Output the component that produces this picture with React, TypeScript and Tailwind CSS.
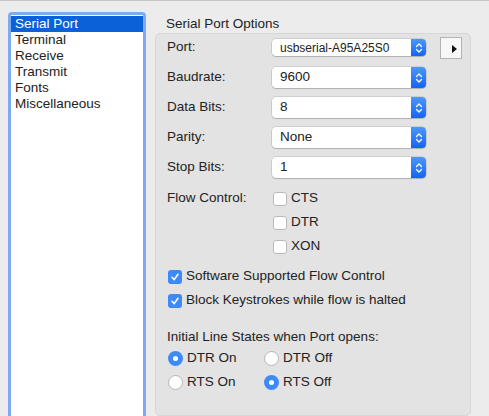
import React from 'react';

const font = { fontFamily: '"Liberation Sans", Arial, sans-serif' };

const categories = ['Serial Port', 'Terminal', 'Receive', 'Transmit', 'Fonts', 'Miscellaneous'];

// blue stepper arrows on the right of a popup
const Stepper = () => (
  <div className="flex h-full w-[15px] items-center justify-center rounded-r-[4px] bg-gradient-to-b from-[#4b97fa] to-[#1463f3]">
    <svg width="8" height="12" viewBox="0 0 8 12" fill="none" stroke="white" strokeWidth="1.3" strokeLinecap="round" strokeLinejoin="round">
      <path d="M1.5 4.5 L4 2 L6.5 4.5" />
      <path d="M1.5 7.5 L4 10 L6.5 7.5" />
    </svg>
  </div>
);

const Popup = ({ value, small }: { value: string; small?: boolean }) => (
  <div
    className={`flex w-[154px] items-center rounded-[4px] bg-white shadow-[0_0_0_0.5px_rgba(0,0,0,0.18),0_1px_1px_rgba(0,0,0,0.15)] ${
      small ? 'h-[17px]' : 'h-[21px]'
    }`}
  >
    <span className={`flex-1 pl-[8px] text-[#222] ${small ? 'text-[12px]' : 'text-[13.5px]'}`}>{value}</span>
    <Stepper />
  </div>
);

const Check = ({ checked }: { checked?: boolean }) =>
  checked ? (
    <span className="flex h-[14px] w-[14px] items-center justify-center rounded-[3px] bg-[#3d8af7]">
      <svg width="10" height="10" viewBox="0 0 10 10" fill="none" stroke="white" strokeWidth="1.6" strokeLinecap="round" strokeLinejoin="round">
        <path d="M2 5.3 L4.2 7.6 L8 2.3" />
      </svg>
    </span>
  ) : (
    <span className="h-[14px] w-[14px] rounded-[3px] border border-[#b9b9b9] bg-white" />
  );

const Radio = ({ on }: { on?: boolean }) =>
  on ? (
    <span className="flex h-[15px] w-[15px] items-center justify-center rounded-full bg-[#3d8af7]">
      <span className="h-[5px] w-[5px] rounded-full bg-white" />
    </span>
  ) : (
    <span className="h-[15px] w-[15px] rounded-full border border-[#b5b5b5] bg-white" />
  );

const Row = ({ label, children }: { label: string; children: React.ReactNode }) => (
  <div className="flex h-[30px] items-center">
    <span className="w-[105px] text-[13.5px] text-[#222]">{label}</span>
    {children}
  </div>
);

export default function App() {
  return (
    <div style={font} className="flex h-[416px] w-[489px] overflow-hidden border-t border-[#c4c4c4] bg-[#ececec]">
      {/* category list */}
      <div className="ml-[8px] mt-[11px] h-[420px] w-[138px] rounded-[4px] bg-[#7eaaf1] p-[3px]">
        <div className="h-full bg-white pt-[1px]">
          {categories.map((c, i) => (
            <div
              key={c}
              className={`flex h-[16px] items-center pl-[4px] text-[13.5px] ${
                i === 0 ? 'bg-[#0b62d8] text-white' : 'text-[#222]'
              }`}
            >
              {c}
            </div>
          ))}
        </div>
      </div>

      {/* options */}
      <div className="ml-[9px] flex w-[316px] flex-col">
        <div className="flex h-[33px] items-end pl-[11px] text-[13.5px] leading-[16px] text-[#222]">
          <span className="pb-[1px]">Serial Port Options</span>
        </div>
        <div className="h-[400px] rounded-[5px] border border-[#d6d6d6] bg-[#e3e3e3] pl-[11px] pt-[3px]">
          <div className="flex h-[22px] items-center">
            <span className="w-[105px] text-[13.5px] text-[#222]">Port:</span>
            <Popup value="usbserial-A95A25S0" small />
            <div className="ml-[14px] flex h-[22px] w-[22px] items-end justify-end border border-[#b3b3b3] bg-[#f7f7f7] pb-[5px] pr-[4px]">
              <svg width="5" height="8" viewBox="0 0 5 8">
                <path d="M0 0 L5 4 L0 8 Z" fill="#111" />
              </svg>
            </div>
          </div>

          <div className="mt-[4px]">
            <Row label="Baudrate:">
              <Popup value="9600" />
            </Row>
            <Row label="Data Bits:">
              <Popup value="8" />
            </Row>
            <Row label="Parity:">
              <Popup value="None" />
            </Row>
            <Row label="Stop Bits:">
              <Popup value="1" />
            </Row>
          </div>

          <div className="mt-[4px] flex">
            <span className="flex h-[24px] w-[106px] items-center text-[13.5px] text-[#222]">Flow Control:</span>
            <div className="flex flex-col">
              {['CTS', 'DTR', 'XON'].map((f) => (
                <div key={f} className="flex h-[24px] items-center gap-[4px] text-[13.5px] text-[#222]">
                  <Check />
                  <span>{f}</span>
                </div>
              ))}
            </div>
          </div>

          <div className="mt-[6px] pl-[1px]">
            <div className="flex h-[24px] items-center gap-[4px] text-[13.5px] text-[#222]">
              <Check checked />
              <span>Software Supported Flow Control</span>
            </div>
            <div className="flex h-[24px] items-center gap-[4px] text-[13.5px] text-[#222]">
              <Check checked />
              <span>Block Keystrokes while flow is halted</span>
            </div>
          </div>

          <div className="mt-[16px] flex h-[18px] items-center text-[13.5px] text-[#222]">
            Initial Line States when Port opens:
          </div>
          <div className="grid grid-cols-[96px_120px] pl-[1px] text-[13.5px] text-[#222]">
            {[
              ['DTR On', true],
              ['DTR Off', false],
              ['RTS On', false],
              ['RTS Off', true],
            ].map(([l, on]) => (
              <div key={l as string} className="flex h-[24px] items-center gap-[4px]">
                <Radio on={on as boolean} />
                <span>{l as string}</span>
              </div>
            ))}
          </div>
        </div>
      </div>
    </div>
  );
}
